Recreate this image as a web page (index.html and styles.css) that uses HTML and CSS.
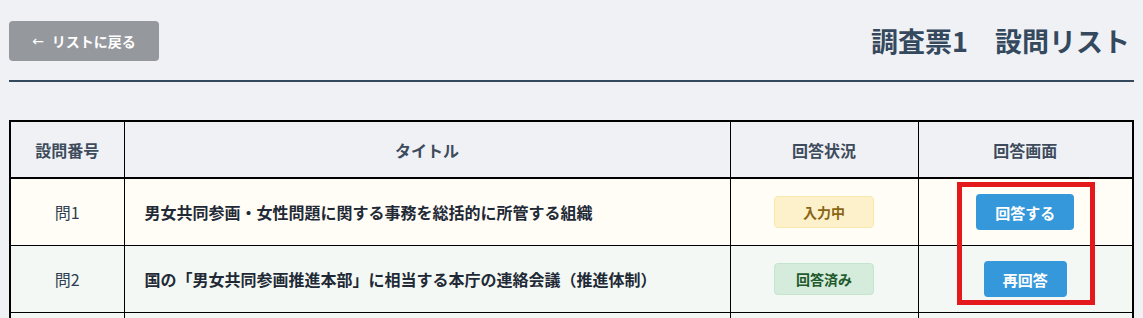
FILE: index.html
```html
<!DOCTYPE html>
<html lang="ja">
  <head>
    <meta charset="UTF-8" />
    <meta name="viewport" content="width=device-width, initial-scale=1.0" />
    <title>設問リスト</title>
    <link rel="stylesheet" href="styles.css">
  </head>
  <body>
    <div class="page">
      <div class="page-header">
        <button type="button" class="back-btn"><span class="arrow">←</span>リストに戻る</button>
        <h1 class="page-title">調査票1　設問リスト</h1>
      </div>

      <div class="table-wrap">
        <table class="q-table">
          <colgroup>
            <col class="col-no" />
            <col class="col-title" />
            <col class="col-status" />
            <col class="col-action" />
          </colgroup>
          <thead>
            <tr>
              <th>設問番号</th>
              <th>タイトル</th>
              <th>回答状況</th>
              <th>回答画面</th>
            </tr>
          </thead>
          <tbody>
            <tr class="row-progress">
              <td class="no">問1</td>
              <td class="title">男女共同参画・女性問題に関する事務を総括的に所管する組織</td>
              <td><span class="badge badge-progress">入力中</span></td>
              <td><button type="button" class="answer-btn">回答する</button></td>
            </tr>
            <tr class="row-done">
              <td class="no">問2</td>
              <td class="title">国の「男女共同参画推進本部」に相当する本庁の連絡会議（推進体制）</td>
              <td><span class="badge badge-done">回答済み</span></td>
              <td><button type="button" class="answer-btn">再回答</button></td>
            </tr>
            <tr class="row-done">
              <td class="no"></td>
              <td class="title"></td>
              <td></td>
              <td></td>
            </tr>
          </tbody>
        </table>
        <!-- 注目枠 -->
        <div class="highlight"></div>
      </div>
    </div>
  </body>
</html>
```

FILE: styles.css
```css
body {
  margin: 0;
  background-color: #f0f1f5;
  font-family: "Noto Sans CJK JP", "Noto Sans", sans-serif;
  color: #2c3e50;
}

.page {
  padding: 0 9px;
}

/* ヘッダー */
.page-header {
  display: flex;
  justify-content: space-between;
  align-items: center;
  padding: 21px 0 19px;
  border-bottom: 2px solid #34495e;
}

.back-btn {
  display: flex;
  align-items: center;
  justify-content: center;
  background-color: #95989d;
  color: #fff;
  border: none;
  border-radius: 4px;
  height: 40px;
  width: 150px;
  font-family: inherit;
  font-size: 14px;
  font-weight: bold;
  cursor: pointer;
}

.back-btn .arrow {
  font-family: "DejaVu Sans", sans-serif;
  font-weight: normal;
  font-size: 14px;
  margin-right: 8px;
}

.page-title {
  margin: 0 4px 0 0;
  font-size: 27px;
  font-weight: bold;
  color: #34495e;
  line-height: 40px;
}

/* 設問テーブル */
.table-wrap {
  position: relative;
  margin-top: 38px;
}

.q-table {
  width: 100%;
  border-collapse: collapse;
  table-layout: fixed;
  border: 2px solid #000;
}

.col-no { width: 114px; }
.col-status { width: 188px; }
.col-action { width: 215px; }

.q-table th {
  background-color: #f0f1f5;
  height: 53px;
  font-size: 16px;
  font-weight: bold;
  color: #3d4b5c;
  border: 1px solid #000;
  border-bottom: 2px solid #000;
}

.q-table td {
  height: 66px;
  border: 1px solid #000;
  text-align: center;
  padding: 0;
}

.row-progress td { background-color: #fffdf6; }
.row-done td { background-color: #f3f8f4; }

.q-table td.no {
  font-size: 16px;
  color: #2c3e50;
}

.q-table td.title {
  text-align: left;
  padding-left: 20px;
  font-size: 16px;
  font-weight: bold;
  color: #1f2a36;
}

.badge {
  display: inline-flex;
  align-items: center;
  justify-content: center;
  box-sizing: border-box;
  width: 100px;
  height: 32px;
  border-radius: 4px;
  font-size: 14px;
  font-weight: bold;
}

.badge-progress {
  background-color: #fdf1cb;
  border: 1px solid #fbe7ac;
  color: #8a6514;
}

.badge-done {
  background-color: #d5ecdc;
  border: 1px solid #c4e4cd;
  color: #1f5a2c;
}

.answer-btn {
  background-color: #3598db;
  color: #fff;
  border: none;
  border-radius: 4px;
  height: 36px;
  padding: 0 19px;
  font-family: inherit;
  font-size: 15px;
  font-weight: bold;
  cursor: pointer;
}

/* 赤い注目枠 */
.highlight {
  position: absolute;
  left: 948px;
  top: 62px;
  width: 138px;
  height: 123px;
  box-sizing: border-box;
  border: 5px solid #e4191c;
  pointer-events: none;
}
```
